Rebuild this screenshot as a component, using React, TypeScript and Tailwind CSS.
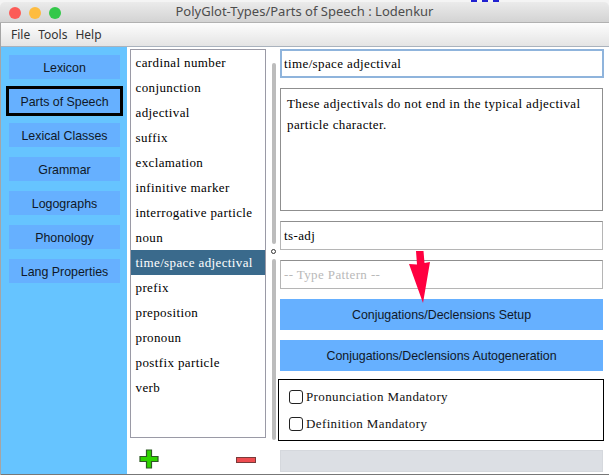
const navItems = ["Lexicon", "Parts of Speech", "Lexical Classes", "Grammar", "Logographs", "Phonology", "Lang Properties"];

const partsOfSpeech = [
  "cardinal number",
  "conjunction",
  "adjectival",
  "suffix",
  "exclamation",
  "infinitive marker",
  "interrogative particle",
  "noun",
  "time/space adjectival",
  "prefix",
  "preposition",
  "pronoun",
  "postfix particle",
  "verb",
];

const serif = "font-['Liberation_Serif',serif] text-[13px] tracking-[0.38px]";
const sans = "pt-[2px] font-['Liberation_Sans',sans-serif] text-[12.4px] text-[#101828]";

function Field({ text, placeholder }: { text: string; placeholder?: boolean }) {
  return (
    <div
      className={`flex h-[29px] w-[323px] items-center border border-[#b5b5b5] border-t-[#8f8f8f] bg-white pl-[3px] ${serif} ${placeholder ? "text-[#b9b9b9]" : "text-black"}`}
    >
      {text}
    </div>
  );
}

function Check({ label }: { label: string }) {
  return (
    <div className={`flex items-center gap-[3px] leading-[14px] ${serif} text-[#111]`}>
      <span className="h-[14px] w-[14px] rounded-[3px] border border-[#222] bg-white" />
      {label}
    </div>
  );
}

export default function App() {
  return (
    <div className="relative h-[475px] w-[609px] overflow-hidden bg-[#f4f4f4] pt-[2px]">
      {/* sliver of the desktop behind the window */}
      <div className="absolute left-[471px] top-0 h-[2px] w-[28px] border-t-2 border-dashed border-[#2020d0]" />

      {/* title bar */}
      <div className="relative flex h-[21px] items-center justify-center rounded-t-[5px] border-b border-[#b1b1b1] bg-gradient-to-b from-[#ebebeb] to-[#d3d3d3] font-['Noto_Sans',sans-serif] text-[13px] text-[#4d4d4d]">
        <div className="absolute left-[9px] top-[5px] flex gap-[8px]">
          <span className="h-[12px] w-[12px] rounded-full bg-[#fc5b57]" />
          <span className="h-[12px] w-[12px] rounded-full bg-[#fdbc40]" />
          <span className="h-[12px] w-[12px] rounded-full bg-[#34c84a]" />
        </div>
        PolyGlot-Types/Parts of Speech : Lodenkur
      </div>

      {/* menu bar */}
      <div className="flex h-[24px] items-center gap-[8px] border-b border-[#a9b2bd] bg-gradient-to-b from-[#fdfdfd] to-[#e4e4e4] pl-[11px] font-['Noto_Sans',sans-serif] text-[12px] text-[#333]">
        <span>File</span>
        <span>Tools</span>
        <span>Help</span>
      </div>

      <div className="flex h-[427px] bg-white pl-[1px]">
        {/* sidebar */}
        <div className="flex w-[126px] flex-col gap-[10px] bg-[#66c4ff] pl-[8px] pt-[8px]">
          {navItems.map((item) => (
            <div
              key={item}
              className={`flex h-[24px] w-[111px] items-center justify-center bg-[#66b0ff] ${sans} ${
                item === "Parts of Speech" ? "outline-[3px] outline-black" : ""
              }`}
            >
              {item}
            </div>
          ))}
        </div>

        {/* list column */}
        <div className="ml-[3px] flex w-[136px] flex-col">
          <div className="mt-[2px] h-[389px] border border-[#9a9aa6] bg-white">
            {partsOfSpeech.map((item) => (
              <div
                key={item}
                className={`flex h-[25px] items-center pl-[4.500px] ${serif} ${
                  item === "time/space adjectival" ? "bg-[#3a6a8c] text-white" : "text-black"
                }`}
              >
                {item}
              </div>
            ))}
          </div>
          <div className="flex items-center pt-[11px]">
            <svg className="ml-[9px]" width="21" height="21" viewBox="0 0 21 21">
              <path d="M7.5 1h5v6.500H19v5h-6.500V19h-5v-6.500H1v-5h6.500z" fill="#2fd400" stroke="#2d5a24" strokeWidth="1.200" />
            </svg>
            <svg className="ml-[76px]" width="20" height="8" viewBox="0 0 20 8">
              <rect x="0.5" y="1.5" width="19" height="5" fill="#ee4c50" stroke="#7a3a3a" />
            </svg>
          </div>
        </div>

        {/* splitter */}
        <div className="ml-[5px] flex w-[5px] flex-col items-center">
          <div className="mt-[16px] h-[181px] w-[4px] rounded-full bg-[#bcbcbc]" />
          <div className="mt-[5px] h-[5px] w-[5px] rounded-full border border-[#333] bg-white" />
          <div className="mt-[5px] h-[181px] w-[4px] rounded-full bg-[#bcbcbc]" />
        </div>

        {/* detail column */}
        <div className="ml-[4px] flex flex-col pt-[2px]">
          <div className={`flex h-[29px] w-[324px] items-center border-2 border-[#8fb4dc] bg-white pl-[2px] text-black ${serif}`}>
            time/space adjectival
          </div>
          <div className={`mt-[10px] h-[123px] w-[323px] border border-[#8f8f8f] bg-white px-[6px] pt-[4px] leading-[21px] text-black ${serif}`}>
            These adjectivals do not end in the typical adjectival particle character.
          </div>
          <div className="mt-[10px]">
            <Field text="ts-adj" />
          </div>
          <div className="mt-[10px]">
            <Field text="-- Type Pattern --" placeholder />
          </div>
          <div className={`mt-[10px] flex h-[31px] w-[323px] items-center justify-center bg-[#66b0ff] ${sans}`}>
            Conjugations/Declensions Setup
          </div>
          <div className={`mt-[10px] flex h-[31px] w-[323px] items-center justify-center bg-[#66b0ff] ${sans}`}>
            Conjugations/Declensions Autogeneration
          </div>
          <div className="-ml-[2px] mt-[8px] flex h-[62px] w-[326px] flex-col justify-center gap-[13px] border border-black bg-white pl-[10px]">
            <Check label="Pronunciation Mandatory" />
            <Check label="Definition Mandatory" />
          </div>
          <div className="mt-[9px] h-[22px] w-[323px] border border-[#d5d8dd] bg-[#dcdfe4]" />
        </div>
      </div>

      {/* window edges */}
      <div className="absolute bottom-0 left-0 h-px w-full bg-[#777]" />
      <div className="absolute bottom-0 left-0 top-[23px] w-px bg-[#a5a5a5]" />

      {/* annotation arrow */}
      <svg className="absolute left-[409px] top-[250px]" width="24" height="54" viewBox="0 0 24 54">
        <path d="M7 1h7.500l1 12L21 12 14 53 0 14l8 .500z" fill="#ff0040" />
      </svg>
    </div>
  );
}
